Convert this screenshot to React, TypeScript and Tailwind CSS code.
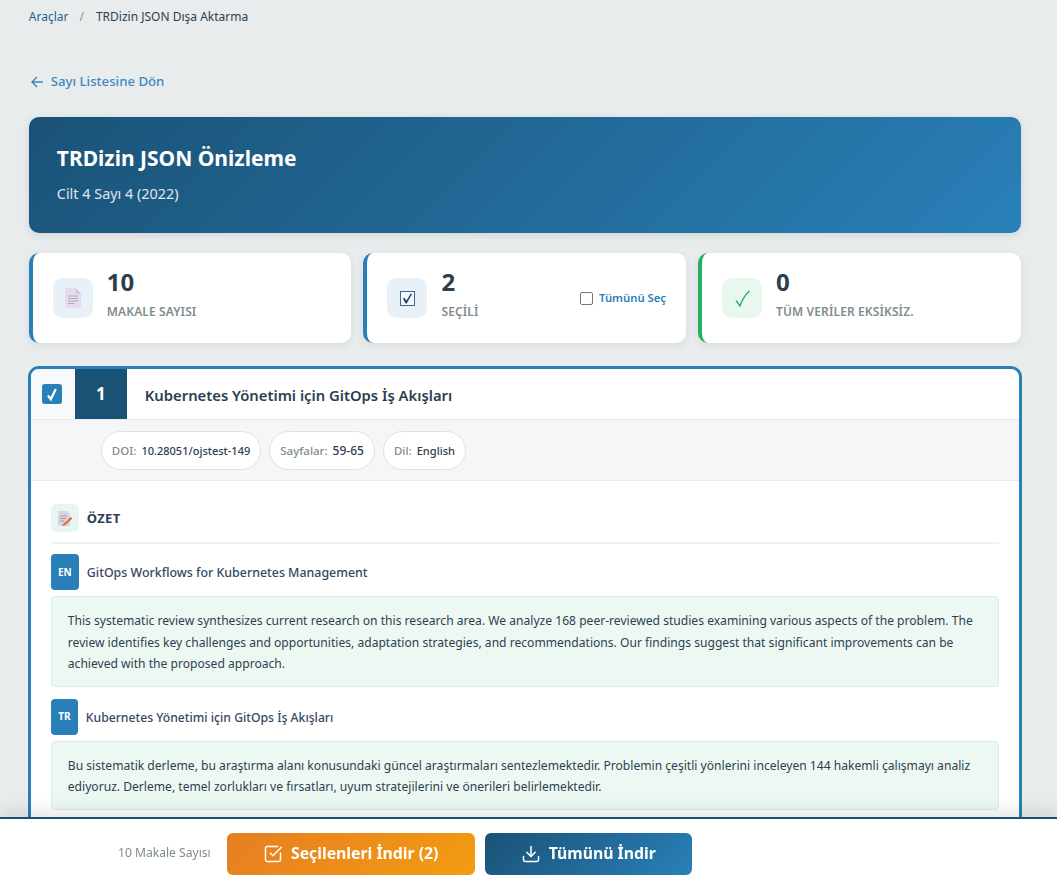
import { Download, SquareCheckBig } from "lucide-react";

function DocIcon() {
  return (
    <svg width="16" height="20" viewBox="0 0 16 20">
      <path d="M0 0h10.500L16 5.500V20H0z" fill="#e6dcef" />
      <path d="M10.500 0L16 5.500h-5.500z" fill="#cfc6d8" />
      <path d="M3 8h10M3 10.500h10M3 13h10M3 15.500h6.500" stroke="#b5a8c0" strokeWidth="1" />
    </svg>
  );
}

function MemoIcon() {
  return (
    <svg width="15" height="15" viewBox="0 0 15 15">
      <path d="M1 0h9l3 3v12H1z" fill="#ddd3df" />
      <path d="M3 5h7M3 7.500h6M3 10h4" stroke="#a99aa8" strokeWidth="1" />
      <path d="M6 13l7-6 1.500 1.500-6.500 6-3 .5z" fill="#e8703a" />
      <path d="M12.500 7l1-1 1.500 1.500-1 1z" fill="#e63b4e" />
    </svg>
  );
}

function BallotIcon() {
  return (
    <svg width="15" height="15" viewBox="0 0 15 15" className="mt-px">
      <rect x="0.500" y="0.500" width="14" height="14" fill="#f4f8fc" stroke="#44688c" />
      <path d="M3 7.500l1.500-.8 1.800 3 4.500-7.200 1.200.6-5.300 9.400h-1.200z" fill="#1f3f66" />
    </svg>
  );
}

function ThinCheckIcon() {
  return (
    <svg width="15" height="17" viewBox="0 0 15 17" className="mt-px" fill="none">
      <path d="M1 10.500l4 5.500C7 10 10 5 14.500 1" stroke="#27ae60" strokeWidth="1.400" />
    </svg>
  );
}

function StatCard({
  icon,
  iconBg,
  value,
  label,
  border,
  children,
}: {
  icon: React.ReactNode;
  iconBg: string;
  value: string;
  label: string;
  border: string;
  children?: React.ReactNode;
}) {
  return (
    <div className={`flex h-[90px] flex-1 items-center rounded-[10px] border-l-4 bg-white px-5 shadow-[0_2px_8px_rgba(0,0,0,0.07)] ${border}`}>
      <div className={`flex h-10 w-10 shrink-0 items-center justify-center rounded-[10px] ${iconBg}`}>{icon}</div>
      <div className="-mt-[9px] ml-[14px]">
        <div className="text-[24px] leading-[30px] font-bold text-[#2c3e50]">{value}</div>
        <div className="mt-[7px] text-[12px] leading-[16px] font-semibold tracking-[0.12px] text-[#7f8c8d]">{label}</div>
      </div>
      {children}
    </div>
  );
}

function MetaPill({ label, value, valueSize }: { label: string; value: string; valueSize: string }) {
  return (
    <div className="flex h-[39px] items-center rounded-full border border-[#dee2e6] bg-white px-[10px]">
      <div className="flex items-baseline gap-[5px] leading-[16px]">
        <span className="text-[11.500px] font-medium text-[#7f8c8d]">{label}</span>
        <span className={`font-medium text-[#2c3e50] ${valueSize}`}>{value}</span>
      </div>
    </div>
  );
}

export default function App() {
  return (
    <div className="h-screen overflow-hidden bg-[#e9eced] font-['Noto_Sans',sans-serif]">
      <div className="pl-[28.800px] pr-[36.400px]">
        <nav className="flex h-[34px] items-center text-[12px] text-[#2c3e50]">
          <span className="text-[#1f6391]">Araçlar</span>
          <span className="mr-[12px] ml-[11px] text-[#8a8f94]">/</span>
          <span>TRDizin JSON Dışa Aktarma</span>
        </nav>

        <a className="mt-[37px] flex h-5 translate-y-px items-center gap-2 pl-[2px] text-[13.200px] font-medium text-[#3d88c0]">
          <svg width="12" height="12" viewBox="0 0 12 12" fill="none" stroke="currentColor" strokeWidth="1.400">
            <path d="M12 6H1M6 1L1 6l5 5" />
          </svg>
          Sayı Listesine Dön
        </a>

        <header className="mt-[26px] h-[116px] rounded-[10px] bg-[linear-gradient(135deg,#1a5276,#2980b9)] px-7 pt-[26px] shadow-[0_2px_8px_rgba(0,0,0,0.1)]">
          <h1 className="text-[21px] leading-[30px] font-bold text-white">TRDizin JSON Önizleme</h1>
          <p className="mt-[11px] text-[14.400px] leading-[20px] text-white/85">Cilt 4 Sayı 4 (2022)</p>
        </header>

        <div className="mt-5 flex gap-3">
          <StatCard icon={<DocIcon />} iconBg="bg-[#e8f0f8]" value="10" label="MAKALE SAYISI" border="border-[#2980b9]" />
          <StatCard icon={<BallotIcon />} iconBg="bg-[#e8f0f8]" value="2" label="SEÇİLİ" border="border-[#2980b9]">
            <label className="ml-auto flex items-center gap-[6px]">
              <span className="h-[13px] w-[13px] rounded-[2px] border border-[#767676] bg-white" />
              <span className="text-[11.300px] font-semibold text-[#2980b9]">Tümünü Seç</span>
            </label>
          </StatCard>
          <StatCard icon={<ThinCheckIcon />} iconBg="bg-[#e8f8ef]" value="0" label="TÜM VERİLER EKSİKSİZ." border="border-[#27ae60]" />
        </div>

        <article className="-mx-px mt-[23px] overflow-hidden rounded-[11px] border-[3px] border-[#2980b9] bg-white">
          <div className="flex h-[51px] items-center border-b border-[#e9ecef]">
            <div className="flex h-full w-[44px] items-center justify-center bg-[#f8f9fa] pr-[2px]">
              <span className="flex h-5 w-5 items-center justify-center rounded-[3px] bg-[#2980b9]">
                <svg width="10" height="13" viewBox="0 0 10 13" fill="none" stroke="white" strokeWidth="2.200">
                  <path d="M1 7.500l2.800 3.800L8.800 1" />
                </svg>
              </span>
            </div>
            <div className="flex h-full w-[52px] items-center justify-center bg-[#1a5276] text-[17px] font-bold text-white">1</div>
            <h2 className="ml-[18px] pt-[2px] text-[14.800px] font-semibold text-[#2c3e50]">Kubernetes Yönetimi için GitOps İş Akışları</h2>
          </div>

          <div className="flex h-[61px] items-center gap-2 border-b border-[#e9ecef] bg-[#f4f6f8] pt-px pl-[70px]">
            <MetaPill label="DOI:" value="10.28051/ojstest-149" valueSize="text-[11px]" />
            <MetaPill label="Sayfalar:" value="59-65" valueSize="text-[12px]" />
            <MetaPill label="Dil:" value="English" valueSize="text-[11.100px]" />
          </div>

          <section className="px-5 pt-[23px] pb-5">
            <div className="flex items-center gap-2 border-b-2 border-[#edf2f7] pb-[10px]">
              <div className="flex h-7 w-7 items-center justify-center rounded-[6px] bg-[#e8f6f3]">
                <MemoIcon />
              </div>
              <span className="pt-px text-[13px] font-bold tracking-[0.3px] text-[#2c3e50]">ÖZET</span>
            </div>

            <div className="mt-[10px] flex items-center gap-2">
              <div className="flex h-9 w-[28px] shrink-0 items-center justify-center rounded-[4px] bg-[#2980b9] text-[10px] font-bold text-white">EN</div>
              <h3 className="pt-[2px] text-[12.400px] font-medium text-[#34495e]">GitOps Workflows for Kubernetes Management</h3>
            </div>
            <p className="mt-[6px] rounded-[4px] border border-[#d5f0e3] bg-[#eef8f3] px-4 pt-[13px] pb-[11px] text-[12.100px] leading-[21.600px] text-[#2c3e50]">
              This systematic review synthesizes current research on this research area. We analyze 168 peer-reviewed studies examining various aspects of the problem. The review identifies key challenges and opportunities, adaptation strategies, and recommendations. Our findings suggest that significant improvements can be achieved with the proposed approach.
            </p>

            <div className="mt-3 flex items-center gap-2">
              <div className="flex h-9 w-[27px] shrink-0 items-center justify-center rounded-[4px] bg-[#2980b9] text-[10px] font-bold text-white">TR</div>
              <h3 className="pt-[2px] text-[12.200px] font-medium text-[#34495e]">Kubernetes Yönetimi için GitOps İş Akışları</h3>
            </div>
            <p className="mt-[6px] rounded-[4px] border border-[#d5f0e3] bg-[#eef8f3] px-4 pt-[13px] pb-[11px] text-[12.100px] leading-[21.600px] text-[#2c3e50]">
              Bu sistematik derleme, bu araştırma alanı konusundaki güncel araştırmaları sentezlemektedir. Problemin çeşitli yönlerini inceleyen 144 hakemli çalışmayı analiz ediyoruz. Derleme, temel zorlukları ve fırsatları, uyum stratejilerini ve önerileri belirlemektedir.
            </p>
          </section>
        </article>
      </div>

      <footer className="fixed right-0 bottom-0 left-0 flex h-[70px] items-start border-t-2 border-[#1a5276] bg-white pt-[14px] pl-[118px] shadow-[0_-6px_16px_rgba(0,0,0,0.1)]">
        <span className="self-center pb-[14px] text-[12.100px] text-[#7f8c8d]">10 Makale Sayısı</span>
        <button className="ml-[16px] flex h-[42px] w-[248px] items-center justify-center gap-2 rounded-[6px] bg-[linear-gradient(135deg,#e67e22,#f39c12)] text-[15.800px] font-bold text-white">
          <SquareCheckBig size={20} strokeWidth={1.8} />
          Seçilenleri İndir (2)
        </button>
        <button className="ml-[10px] flex h-[42px] w-[207px] items-center justify-center gap-2 rounded-[6px] bg-[linear-gradient(135deg,#1a5276,#2980b9)] text-[15.800px] font-bold text-white">
          <Download size={20} strokeWidth={1.8} />
          Tümünü İndir
        </button>
      </footer>
    </div>
  );
}
